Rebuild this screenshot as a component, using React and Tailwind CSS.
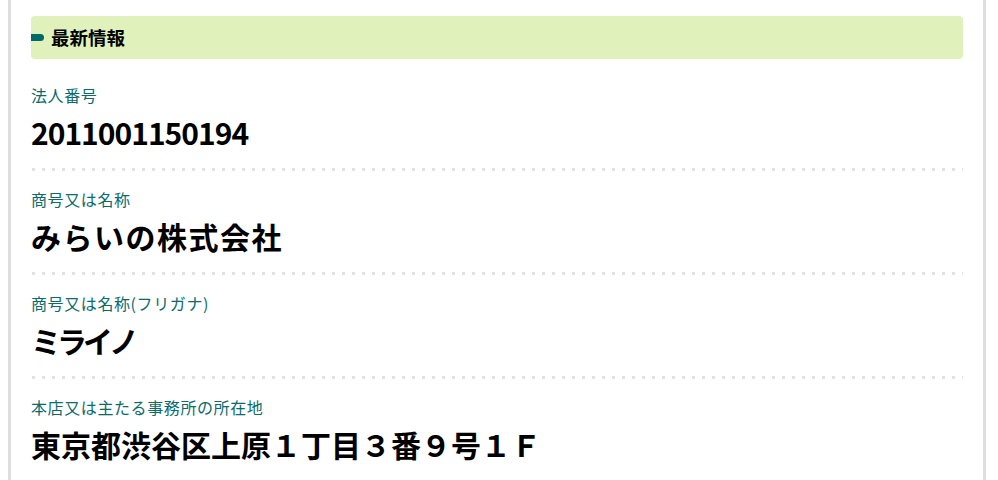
export default function App() {
  const rows = [
    { label: "法人番号", value: "2011001150194", vt: "tracking-[-1px]" },
    { label: "商号又は名称", value: "みらいの株式会社", vt: "tracking-[1.5px]" },
    { label: "商号又は名称(フリガナ)", value: "ミライノ", vt: "tracking-[-4px]" },
    { label: "本店又は主たる事務所の所在地", value: "東京都渋谷区上原１丁目３番９号１Ｆ", vt: "tracking-[0px]" },
  ];
  const font = { fontFamily: '"Noto Sans CJK JP", "Noto Sans", sans-serif' };
  return (
    <div className="w-[998px] h-[480px] overflow-hidden bg-white" style={font}>
      <div className="ml-[8px] mr-[12px] h-full border-l-[3px] border-r-[3px] border-[#dedede] pt-[16px] px-[20px]">
        <div className="flex h-[43px] items-center rounded-[4px] bg-[#e1f1bb]">
          <span className="h-[7px] w-[13px] rounded-r-full bg-[#00696a]" />
          <span className="ml-[7px] text-[18.5px] font-bold leading-none text-black">最新情報</span>
        </div>
        <div className="mt-[8px]">
          {rows.map((r, i) => (
            <div key={i}>
              {i > 0 && (
                <div className="ml-[1px] h-[3px] bg-[repeating-linear-gradient(to_right,#e2e2e2_0px,#e2e2e2_3px,transparent_3px,transparent_10px)]" />
              )}
              <div className="pt-[16px] pb-[16px]">
                <div className="text-[16px] font-normal leading-[24px] tracking-[0.6px] text-[#0b6a6c]">{r.label}</div>
                <div className={"mt-[5px] text-[30px] font-bold leading-[40px] text-black " + r.vt}>{r.value}</div>
              </div>
            </div>
          ))}
        </div>
      </div>
    </div>
  );
}
